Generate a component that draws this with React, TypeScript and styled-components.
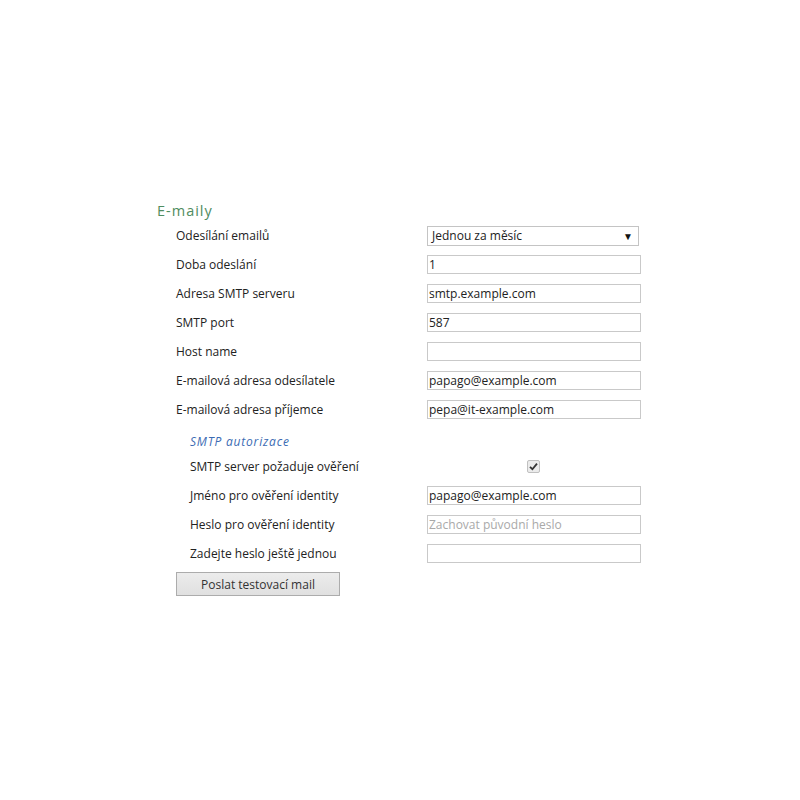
import styled, { createGlobalStyle } from 'styled-components';

const GlobalStyle = createGlobalStyle`
html, body {
    margin: 0;
    padding: 0;
    background: #ffffff;
}
body {
    font-family: "Open Sans", "Noto Sans", "Liberation Sans", sans-serif;
    font-size: 12px;
    color: #222;
}
`;

const Page = styled.div`
padding: 201px 0 0 157px;
width: 800px;
height: 800px;
box-sizing: border-box;
`;

const Title = styled.h2`
margin: 0;
font-size: 14.5px;
line-height: 20px;
font-weight: 400;
letter-spacing: 1px;
color: #4f8c60;
`;

const SubTitle = styled.h3`
margin: 0;
padding: 8px 0 0 33px;
font-size: 12px;
line-height: 20px;
font-weight: 400;
font-style: italic;
letter-spacing: 0.8px;
color: #3b6bb3;
`;

const Row = styled.div`
display: flex;
align-items: center;
height: 29px;
`;

const Label = styled.label<{ $indent: number }>`
width: 270px;
box-sizing: border-box;
padding-left: ${(p) => p.$indent}px;
color: #222;
`;

const Field = styled.div`
width: 214px;
display: flex;
justify-content: center;
`;

const Input = styled.input`
width: 214px;
height: 19px;
box-sizing: border-box;
border: 1px solid #c9c9c9;
padding: 0 1px;
margin: 0;
font-family: inherit;
font-size: 12px;
color: #222;
outline: none;
&::placeholder {
    color: #a9a9a9;
}
`;

const SelectBox = styled.div`
width: 212px;
height: 20px;
box-sizing: border-box;
border: 1px solid #c4c4c4;
display: flex;
align-items: center;
justify-content: space-between;
padding: 0 5px 0 4px;
margin-right: 2px;
color: #222;
`;

const Arrow = styled.span`
font-size: 10px;
color: #111;
`;

const Check = styled.span`
width: 11px;
height: 11px;
border: 1px solid #c0c0c0;
background: #ebebeb;
border-radius: 2px;
display: flex;
align-items: center;
justify-content: center;
margin-left: -2px;
`;

const Button = styled.button`
margin: 4px 0 0 19px;
width: 164px;
height: 24px;
border: 1px solid #acacac;
background: linear-gradient(#ececec, #e0e0e0);
font-family: inherit;
font-size: 12px;
color: #333;
padding: 0;
`;

interface FieldDef {
    label: string;
    value?: string;
    placeholder?: string;
    type?: string;
}

const mainFields: FieldDef[] = [
    { label: 'Doba odeslání', value: '1' },
    { label: 'Adresa SMTP serveru', value: 'smtp.example.com' },
    { label: 'SMTP port', value: '587' },
    { label: 'Host name', value: '' },
    { label: 'E-mailová adresa odesílatele', value: 'papago@example.com' },
    { label: 'E-mailová adresa příjemce', value: 'pepa@it-example.com' },
];

const authFields: FieldDef[] = [
    { label: 'Jméno pro ověření identity', value: 'papago@example.com' },
    { label: 'Heslo pro ověření identity', placeholder: 'Zachovat původní heslo', type: 'password' },
    { label: 'Zadejte heslo ještě jednou', value: '', type: 'password' },
];

function TextRow({ f, indent }: { f: FieldDef; indent: number }) {
    return (
        <Row>
            <Label $indent={indent}>{f.label}</Label>
            <Field>
                <Input
                    type={f.type || 'text'}
                    defaultValue={f.value}
                    placeholder={f.placeholder}
                />
            </Field>
        </Row>
    );
}

export default function App() {
    return (
        <>
            <GlobalStyle />
            <Page>
                <Title>E-maily</Title>
                <Row>
                    <Label $indent={19}>Odesílání emailů</Label>
                    <Field>
                        <SelectBox>
                            <span>Jednou za měsíc</span>
                            <Arrow>▼</Arrow>
                        </SelectBox>
                    </Field>
                </Row>
                {mainFields.map((f) => (
                    <TextRow key={f.label} f={f} indent={19} />
                ))}
                <SubTitle>SMTP autorizace</SubTitle>
                <Row>
                    <Label $indent={33}>SMTP server požaduje ověření</Label>
                    <Field>
                        <Check>
                            <svg width="9" height="9" viewBox="0 0 9 9">
                                <path d="M1 4.8 L3.4 7.2 L8 1.6" fill="none" stroke="#333" strokeWidth="1.8" />
                            </svg>
                        </Check>
                    </Field>
                </Row>
                {authFields.map((f) => (
                    <TextRow key={f.label} f={f} indent={33} />
                ))}
                <Button>Poslat testovací mail</Button>
            </Page>
        </>
    );
}
